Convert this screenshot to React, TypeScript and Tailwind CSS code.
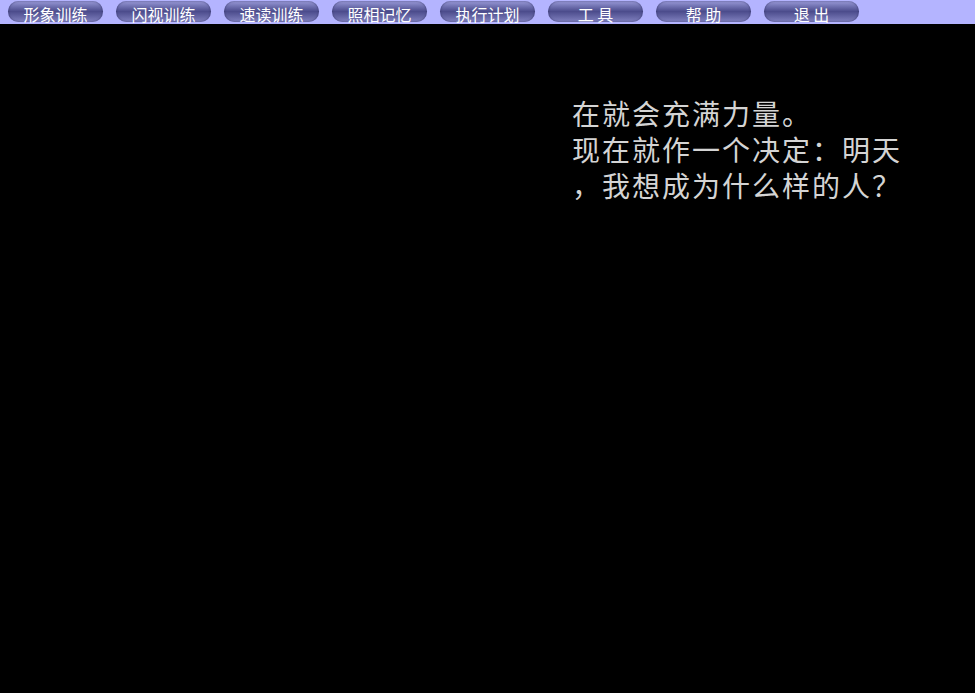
import React from "react";

const items = ["形象训练", "闪视训练", "速读训练", "照相记忆", "执行计划", "工 具", "帮 助", "退 出"];

export default function App() {
  return (
    <div className="w-[975px] h-[693px] bg-black flex flex-col overflow-hidden" style={{ fontFamily: '"Noto Sans CJK SC", "Noto Sans", sans-serif' }}>
      <div className="h-[24px] bg-[#b4b4ff] flex items-start pl-[8px] gap-[13px] shrink-0 relative z-10">
        {items.map((t) => (
          <div key={t} className="w-[95px] h-[24px] relative flex justify-center">
            <div className="absolute left-0 right-0 top-[1px] h-[21px] rounded-full bg-gradient-to-b from-[#9a9ad8] via-[#4c4c8c] to-[#8282c0] shadow-[inset_0_0_2px_rgba(40,40,90,0.8)]" />
            <span className="relative pt-[6px] text-[16px] leading-[17px] text-white whitespace-pre">{t}</span>
          </div>
        ))}
      </div>
      <div className="flex-1 pl-[572px] pt-[71px]">
        <p className="text-[28px] leading-[36px] tracking-[2px] text-[#d4d4d4]">
          在就会充满力量。<br />现在就作一个决定：明天<br />，我想成为什么样的人？
        </p>
      </div>
    </div>
  );
}
